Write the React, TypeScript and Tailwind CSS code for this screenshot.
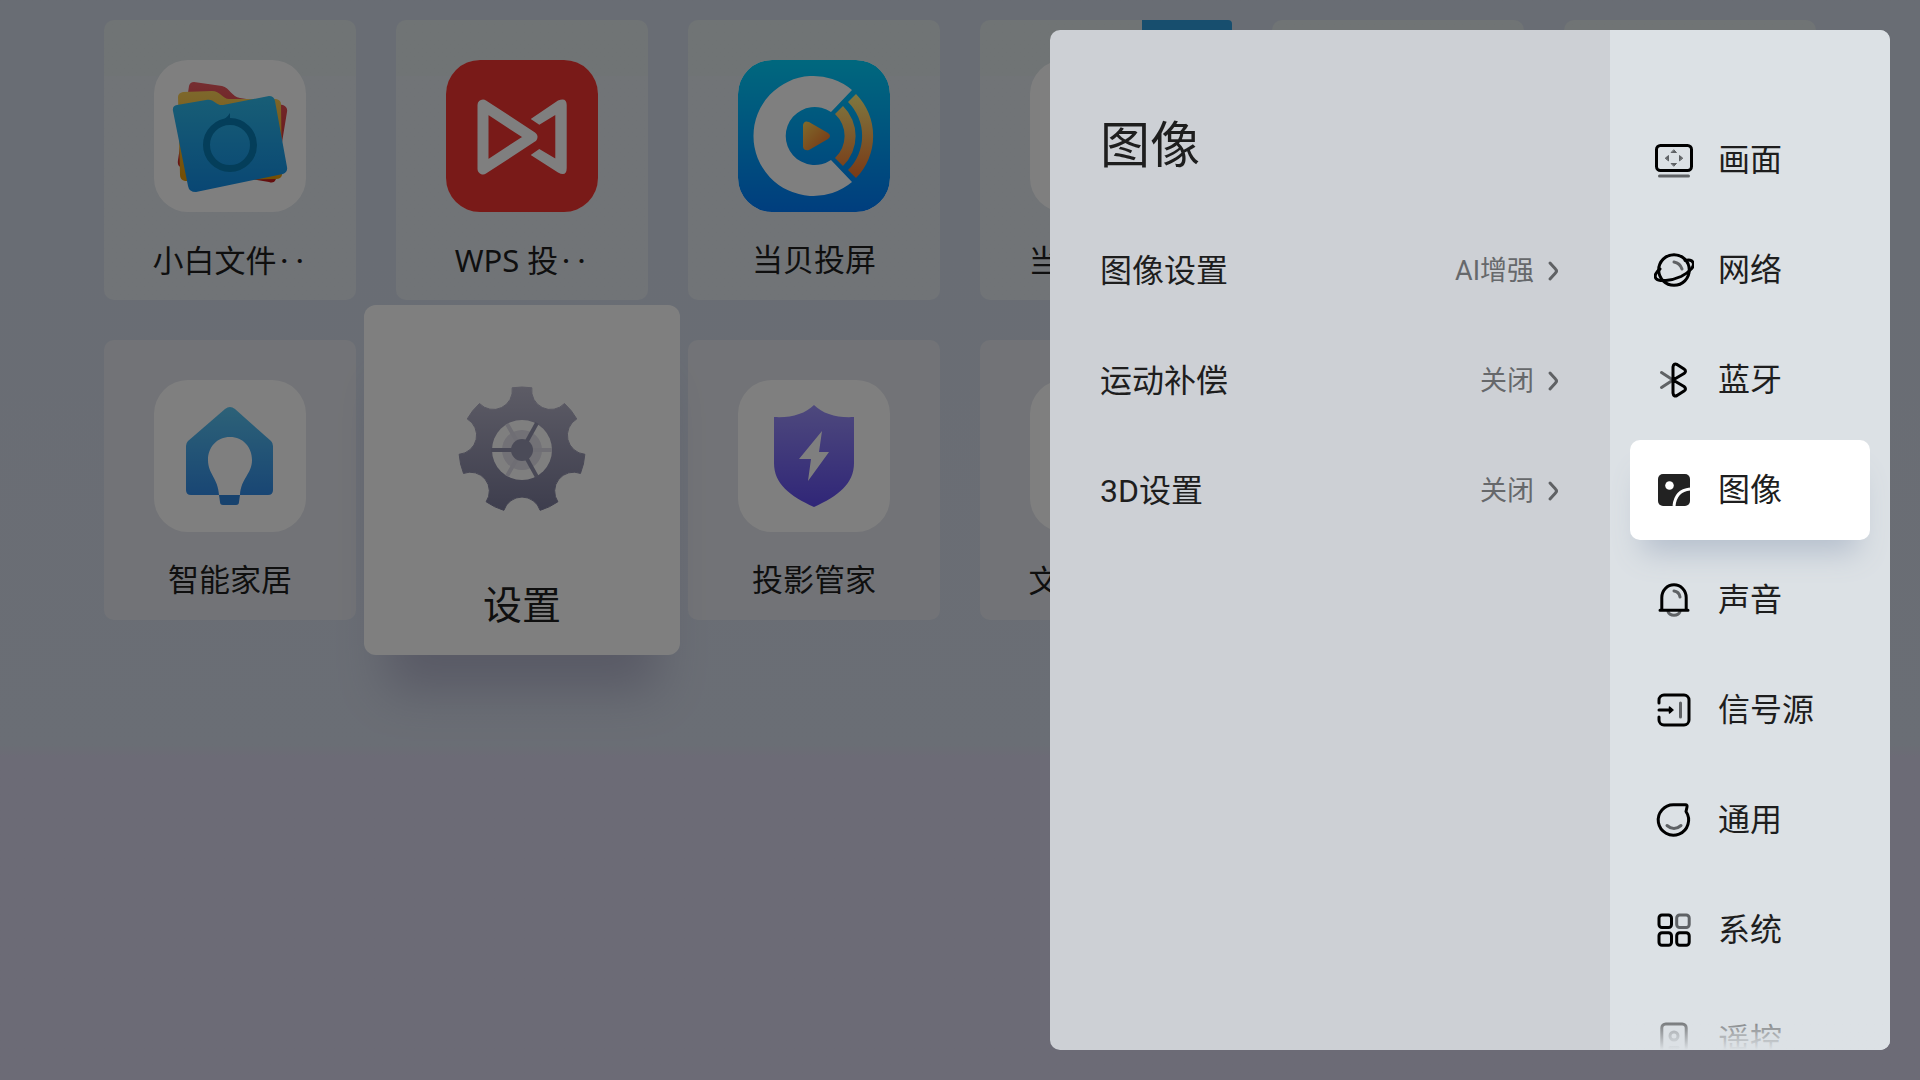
import { useState, type ReactNode } from 'react'

type Tile = { name: string; icon: ReactNode; cut?: boolean; badge?: boolean }

const rad = (deg: number) => (deg * Math.PI) / 180
const polar = (r: number, deg: number) =>
  `${(r * Math.sin(rad(deg))).toFixed(2)} ${(-r * Math.cos(rad(deg))).toFixed(2)}`

// seven teeth, with a round scallop between each pair
const gearPath =
  Array.from({ length: 7 }, (_, i) => {
    const mid = (i * 360) / 7
    return `${i === 0 ? 'M' : 'A19 19 0 0 0 '}${polar(63, mid - 9)} A63 63 0 0 1 ${polar(63, mid + 9)}`
  }).join(' ') + ` A19 19 0 0 0 ${polar(63, -9)} Z`

function FolderIcon() {
  return (
    <svg viewBox="0 0 152 152" className="size-full" aria-hidden>
      <defs>
        <linearGradient id="folder-red" x1="0" y1="0" x2="0" y2="1">
          <stop offset="0" stopColor="#ec5c62" />
          <stop offset="1" stopColor="#c81c1c" />
        </linearGradient>
        <linearGradient id="folder-yellow" x1="0" y1="0" x2="0" y2="1">
          <stop offset="0" stopColor="#fcd058" />
          <stop offset="1" stopColor="#e89c08" />
        </linearGradient>
        <linearGradient id="folder-blue" x1="0" y1="0" x2="0" y2="1">
          <stop offset="0" stopColor="#30bcec" />
          <stop offset="1" stopColor="#128ee8" />
        </linearGradient>
      </defs>
      <path
        fill="url(#folder-red)"
        d="M40 22 L68 26 C76 28 78 37 86 38 L129 45 Q134 47 133 52 L122 119 Q120 124 115 122 L27 107 Q23 106 24 100 L35 26 Q36 22 40 22Z"
      />
      <path
        fill="url(#folder-yellow)"
        d="M29 32 L58 31 C66 31 69 39 75 39 L122 39 Q127 40 127 44 L128 115 Q127 119 122 119 L31 121 Q26 120 26 115 L24 37 Q24 33 29 32Z"
      />
      <path
        fill="url(#folder-blue)"
        d="M23 45 L52 40 C60 38 62 46 69 45 L115 36 Q120 36 121 41 L133 107 Q134 112 129 114 L42 132 Q35 132 34 126 L19 51 Q18 46 23 45Z"
      />
      <circle cx="76" cy="85" r="23.5" fill="none" stroke="#087cb4" strokeWidth="7" />
      <path fill="#087cb4" d="M62 63 Q72 60 76 53 V63Z" />
    </svg>
  )
}

function WpsIcon() {
  return (
    <svg viewBox="0 0 152 152" className="size-full" aria-hidden>
      <rect width="152" height="152" rx="24" fill="#f23430" />
      <path d="M37 45 L86 77 L37 109Z" fill="none" stroke="#fff" strokeWidth="11" strokeLinejoin="round" />
      <path
        fill="#fff"
        d="M84.7 59 L112 40.5 Q120.7 37 120.7 45 V108 Q120.7 117 112 112.5 L84.7 95 L93.3 89 L109.3 98.5 V55 L93.3 64.7Z"
      />
    </svg>
  )
}

function CastIcon() {
  return (
    <svg viewBox="0 0 152 152" className="size-full" aria-hidden>
      <defs>
        <linearGradient id="cast-bg" x1="0" y1="0" x2="0" y2="1">
          <stop offset="0" stopColor="#00d0fc" />
          <stop offset="1" stopColor="#007cfc" />
        </linearGradient>
        <linearGradient id="cast-wave" gradientUnits="userSpaceOnUse" x1="0" y1="34" x2="0" y2="118">
          <stop offset="0" stopColor="#fff080" />
          <stop offset="1" stopColor="#f4742c" />
        </linearGradient>
        <linearGradient id="cast-play" x1="0" y1="0" x2="1" y2="1">
          <stop offset="0" stopColor="#ffd858" />
          <stop offset="1" stopColor="#f06828" />
        </linearGradient>
      </defs>
      <rect width="152" height="152" rx="34" fill="url(#cast-bg)" />
      <path fill="#fff" d="M114 30 A60 60 0 1 0 114 122 L93 100 A29 29 0 1 1 93 52Z" />
      <g fill="url(#cast-wave)">
        <path d="M105 46 A42 42 0 0 1 105 106 L97 98 A30 30 0 0 0 97 54Z" />
        <path d="M118 34 A60 60 0 0 1 118 118 L110 110 A48 48 0 0 0 110 42Z" />
      </g>
      <path
        fill="url(#cast-play)"
        d="M65 65 Q66 60 71 62 L90 73 Q94 76 90 79 L71 90 Q66 91 65 87Z"
      />
    </svg>
  )
}

function HomeBulbIcon() {
  return (
    <svg viewBox="0 0 152 152" className="size-full" aria-hidden>
      <defs>
        <linearGradient id="house" x1="0" y1="0" x2="0" y2="1">
          <stop offset="0" stopColor="#5ac4f0" />
          <stop offset="1" stopColor="#328ce8" />
        </linearGradient>
      </defs>
      <path
        fill="url(#house)"
        d="M71 29 Q76 25 81 29 L117 61 Q119 63 119 66 V110 Q119 115 114 115 H37 Q32 115 32 110 V66 Q32 63 34 61Z"
      />
      <path fill="#fff" d="M76 57 C63 57 54 67 54 80 C54 94 64 98 65 115 H86 C87 98 98 94 98 80 C98 67 89 57 76 57Z" />
      <path fill="#2f84dc" d="M65 115 H86 L85 122 Q85 125 82 125 H69 Q66 125 66 122Z" />
    </svg>
  )
}

function ShieldIcon() {
  return (
    <svg viewBox="0 0 152 152" className="size-full" aria-hidden>
      <defs>
        <linearGradient id="shield" x1="0" y1="0" x2="0" y2="1">
          <stop offset="0" stopColor="#9c92fa" />
          <stop offset="1" stopColor="#604cf0" />
        </linearGradient>
      </defs>
      <path
        fill="url(#shield)"
        d="M76 25 C67 34 53 38 36 37 V83 C36 104 52 116 76 127 C100 116 116 104 116 83 V37 C99 38 85 34 76 25Z"
      />
      <path fill="#fff" d="M84 51 L61 79 H73 L70 101 L91 72 H81Z" />
    </svg>
  )
}

function GearIcon() {
  return (
    <svg viewBox="-95 -95 190 190" className="size-[190px]" aria-hidden>
      <defs>
        <linearGradient id="gear" gradientUnits="userSpaceOnUse" x1="0" y1="-63" x2="0" y2="63">
          <stop offset="0" stopColor="#bab8cc" />
          <stop offset="1" stopColor="#7a7a9a" />
        </linearGradient>
      </defs>
      <path d={gearPath} fill="url(#gear)" stroke="url(#gear)" strokeLinejoin="round" />
      <circle r="30" fill="#fff" />
      <circle r="20" fill="#e4e2ec" />
      <g stroke="#dedce8" strokeWidth="4">
        <path d="M0 0 H30" />
        <path d="M0 0 L-15 -26" />
        <path d="M0 0 L-15 26" />
      </g>
      <g stroke="#9292ac" strokeWidth="4">
        <path d="M0 0 H-31" />
        <path d="M0 0 L15 -27" />
        <path d="M0 0 L15 27" />
      </g>
      <circle r="11" fill="#9696b0" />
    </svg>
  )
}

const topRow: Tile[] = [
  { name: '小白文件', icon: <FolderIcon />, cut: true },
  { name: 'WPS 投', icon: <WpsIcon />, cut: true },
  { name: '当贝投屏', icon: <CastIcon /> },
  { name: '当贝影音', icon: null, cut: true, badge: true },
  { name: '', icon: null },
  { name: '', icon: null },
]

function TileCard({ tile, tone }: { tile: Tile; tone: string }) {
  return (
    <button type="button" className={`relative flex flex-col items-center rounded-[10px] pt-10 pb-[14px] ${tone}`}>
      {tile.badge && <span className="absolute top-0 right-0 h-10 w-[90px] rounded-tr bg-[#2e9cdc]" />}
      <span className="size-[152px] overflow-hidden rounded-[34px] bg-white">{tile.icon}</span>
      <span className="mt-5 h-[54px] font-['Noto_Sans','Noto_Sans_CJK_SC',sans-serif] text-[31px] leading-[54px] whitespace-nowrap">
        {tile.name}
        {tile.cut && <span className="font-['Noto_Sans_CJK_SC',sans-serif]" lang="zh-CN">‥</span>}
      </span>
    </button>
  )
}

const soft = { stroke: '#5f6265' }

const navItems: { label: string; icon: ReactNode }[] = [
  {
    label: '画面',
    icon: (
      <>
        <rect x="2.5" y="5.5" width="35" height="25" rx="4" />
        <path d="M5.5 36 H34.5" {...soft} />
        <path
          fill="#5f6265"
          strokeWidth="1"
          {...soft}
          d="M20 10 L22.5 12.5 H17.5Z M20 26 L22.5 23.5 H17.5Z M11.5 18 L14.5 15.5 V20.5Z M28.5 18 L25.5 15.5 V20.5Z"
        />
      </>
    ),
  },
  {
    label: '网络',
    icon: (
      <>
        <circle cx="20" cy="20" r="15.3" />
        <path d="M6 19 C2 22 0 26 2 28.5 C5 32 17 31 27 26.5 C36 22 41 16 39 12.5 C38 10 35 9.5 31 10.5" />
        <path d="M20 12 Q26 13 28 19" {...soft} />
      </>
    ),
  },
  {
    label: '蓝牙',
    icon: (
      <>
        <path d="M7.5 12.5 L19 20 L7.5 27.5" {...soft} />
        <path d="M19 20 V7 Q19.5 3 23 4.5 L30 9 Q33 11 30 13.5 L19 20 L30 26.5 Q33 29 30 31 L23 35.5 Q19.5 37 19 33Z" />
      </>
    ),
  },
  {
    label: '图像',
    icon: (
      <>
        <rect x="4" y="4" width="32" height="32" rx="5" fill="#222" stroke="none" />
        <circle cx="15.5" cy="15.5" r="4.3" fill="#fff" stroke="none" />
        <path d="M20 36 C21 26 26 20 36 19" stroke="#fff" strokeLinecap="butt" />
      </>
    ),
  },
  {
    label: '声音',
    icon: (
      <>
        <path d="M14 31.5 A6.2 5 0 0 0 26 31.5" {...soft} />
        <path d="M7.8 30 V17.5 A12.2 12.8 0 0 1 32.2 17.5 V30 M6 30.3 H34" />
        <path d="M20 11 Q25 11.5 26 17" {...soft} />
      </>
    ),
  },
  {
    label: '信号源',
    icon: (
      <>
        <path d="M5 13 V10 A5 5 0 0 1 10 5 H30 A5 5 0 0 1 35 10 V30 A5 5 0 0 1 30 35 H10 A5 5 0 0 1 5 30 V27" />
        <path d="M5 20 H16" />
        <path d="M15.5 17 L19 20 L15.5 23Z" fill="#000" strokeWidth="1.5" />
        <path d="M26.5 13 V27" {...soft} />
      </>
    ),
  },
  {
    label: '通用',
    icon: (
      <>
        <path d="M32 11.5 A15.2 15.2 0 1 1 20 4.8 H31.5 Q33.5 4.8 33 7 Z" />
        <path d="M13 25.5 Q20 31.5 27 25.5" {...soft} />
      </>
    ),
  },
  {
    label: '系统',
    icon: (
      <>
        <rect x="5" y="5" width="12.5" height="12.5" rx="3" />
        <rect x="22.7" y="5" width="12.5" height="12.5" rx="3" {...soft} />
        <rect x="5" y="22.7" width="12.5" height="12.5" rx="3" />
        <rect x="22.7" y="22.7" width="12.5" height="12.5" rx="3" />
      </>
    ),
  },
  {
    label: '遥控',
    icon: (
      <>
        <rect x="7.8" y="4" width="24.4" height="32" rx="4" />
        <circle cx="20" cy="16" r="4" {...soft} />
        <path d="M16 27.5 H24" {...soft} />
      </>
    ),
  },
]

const settings = [
  { label: '图像设置', value: 'AI增强' },
  { label: '运动补偿', value: '关闭' },
  { label: '3D设置', value: '关闭' },
]

export default function App() {
  const [active, setActive] = useState('图像')

  return (
    <div className="relative h-screen overflow-hidden bg-linear-to-b from-[#d2dae8] from-0% via-[#d5dcea] via-69% to-[#d8d7ec] to-70% font-[Roboto,'Noto_Sans_CJK_SC',sans-serif] text-[#1e1e1e]">
      <main className="grid grid-cols-6 gap-10 px-[104px] pt-5">
        {topRow.map((tile, i) => (
          <TileCard key={i} tile={tile} tone="bg-linear-to-b from-[#e0e8ea] from-20% to-[#e2e8ee] to-20%" />
        ))}
        <TileCard tile={{ name: '智能家居', icon: <HomeBulbIcon /> }} tone="bg-[#e5e7ee]" />
        <button
          type="button"
          className="z-10 -mx-8 -my-[35px] flex flex-col items-center rounded-xl bg-white pt-[50px] pb-[13px] shadow-[0_58px_45px_-23px_#b2b4cb]"
        >
          <GearIcon />
          <span className="mt-[25px] text-[39px] leading-[72px]">设置</span>
        </button>
        <TileCard tile={{ name: '投影管家', icon: <ShieldIcon /> }} tone="bg-[#e5e7ee]" />
        <TileCard tile={{ name: '文件快传', icon: null, cut: true }} tone="bg-[#e5e7ee]" />
      </main>

      <div className="absolute inset-0 z-20 bg-black/50" />

      <section className="absolute top-[30px] right-[30px] bottom-[30px] z-30 flex w-[840px] overflow-hidden rounded-[10px] bg-[#cdd0d5]">
        <div className="flex-1 pt-[76px] pr-[49px] pl-[50px]">
          <h1 className="text-[50px] leading-[80px]">图像</h1>
          <ul className="mt-[35px] flex flex-col gap-[10px]">
            {settings.map(({ label, value }) => (
              <li key={label}>
                <button type="button" className="flex h-[100px] w-full items-center">
                  <span className="text-[32px]">{label}</span>
                  <span className="ml-auto text-[27px] text-[#66686b]">{value}</span>
                  <svg viewBox="0 0 14 24" className="ml-[13px] h-6 w-3.5" aria-hidden>
                    <path
                      d="M3 4 L8.5 10 Q10.5 12 8.5 14 L3 20"
                      fill="none"
                      stroke="#5f6164"
                      strokeWidth="3"
                      strokeLinecap="round"
                      strokeLinejoin="round"
                    />
                  </svg>
                </button>
              </li>
            ))}
          </ul>
        </div>

        <nav className="relative w-[280px] overflow-hidden bg-[#dce1e5] px-5 pt-20">
          <div className="flex flex-col gap-[10px]">
            {navItems.map(({ label, icon }) => (
              <button
                key={label}
                type="button"
                onClick={() => setActive(label)}
                className={`flex h-[100px] shrink-0 items-center gap-6 rounded-[10px] px-6 text-[32px] ${
                  active === label ? 'bg-white shadow-[0_24px_30px_-12px_#b4becc]' : ''
                }`}
              >
                <svg
                  viewBox="0 0 40 40"
                  className="size-10"
                  fill="none"
                  stroke="#000"
                  strokeWidth="3"
                  strokeLinecap="round"
                  strokeLinejoin="round"
                  aria-hidden
                >
                  {icon}
                </svg>
                {label}
              </button>
            ))}
          </div>
          <div className="pointer-events-none absolute inset-x-0 bottom-0 h-[60px] bg-linear-to-b from-[#dce1e5]/0 to-[#dce1e5]" />
        </nav>
      </section>
    </div>
  )
}
